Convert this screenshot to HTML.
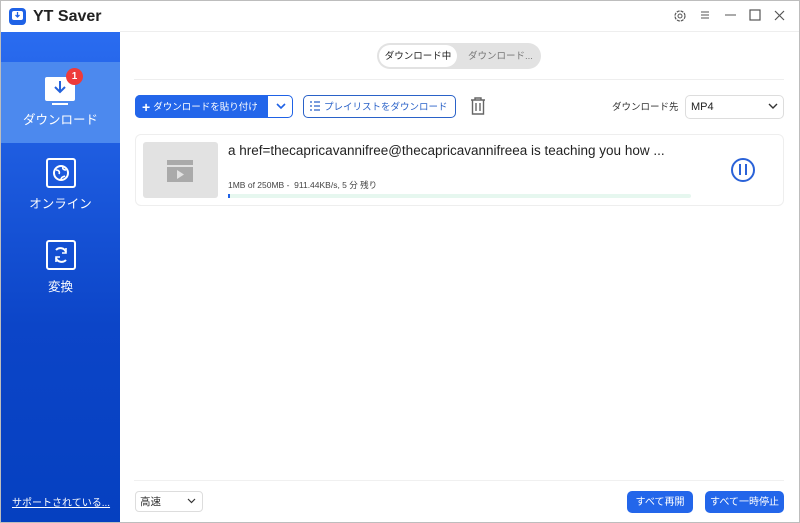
<!DOCTYPE html>
<html><head><meta charset="utf-8"><style>
*{margin:0;padding:0;box-sizing:border-box}
body{width:800px;height:523px;overflow:hidden;background:#fff;font-family:"Liberation Sans","Noto Sans CJK JP",sans-serif;position:relative;color:#333}
.win{position:absolute;left:0;top:0;width:800px;height:523px;border:1px solid #bdbdbd}
.abs{position:absolute;white-space:nowrap}
.side{position:absolute;left:1px;top:32px;width:119px;height:490px;background:linear-gradient(#2a6cf0,#0c45c8 60%,#0540c0)}
.act{position:absolute;left:0;top:30px;width:119px;height:81px;background:#4c89ee}
.sidetxt{color:#fff;font-size:12.5px;text-align:center;width:119px;position:absolute;left:0;white-space:nowrap}
.btn{position:absolute;border-radius:5px;font-size:10px;white-space:nowrap;display:flex;align-items:center;line-height:1}
.c{justify-content:center}
.btn span{position:relative;top:1px}
</style></head><body>
<div class="win"></div>
<div class="abs" style="left:9px;top:8px;width:17px;height:17px;background:#1f62e6;border-radius:4px"></div>
<div class="abs" style="left:12px;top:11px;width:11px;height:9px;background:#fff;border-radius:2px"></div>
<svg class="abs" style="left:13px;top:11px" width="9" height="9"><path d="M4.5 1v5M2.5 4l2 2 2-2" stroke="#1f62e6" stroke-width="1.3" fill="none"/></svg>
<div class="abs" style="left:33px;top:8px;font-size:16px;font-weight:bold;color:#222">YT Saver</div>
<svg class="abs" style="left:673px;top:9px" width="14" height="14"><circle cx="7" cy="7" r="5" stroke="#555" fill="none" stroke-width="1.2" stroke-dasharray="3 1"/><circle cx="7" cy="7" r="2" stroke="#555" fill="none"/></svg>
<svg class="abs" style="left:700px;top:10px" width="10" height="10"><path d="M1 2h8M1 5h8M1 8h8" stroke="#555"/></svg>
<svg class="abs" style="left:725px;top:10px" width="11" height="10"><path d="M0 5h11" stroke="#555"/></svg>
<svg class="abs" style="left:749px;top:9px" width="12" height="12"><rect x="1" y="1" width="10" height="10" stroke="#555" fill="none" stroke-width="1.2"/></svg>
<svg class="abs" style="left:774px;top:10px" width="11" height="11"><path d="M1 1l9 9M10 1l-9 9" stroke="#555" stroke-width="1.2"/></svg>
<div class="abs" style="left:120px;top:31px;width:679px;height:1px;background:#eee"></div>
<div class="side">
 <div class="act"></div>
 <div class="abs" style="left:44px;top:45px;width:30px;height:24px;background:#fff;border-radius:2px"></div>
 <div class="abs" style="left:51px;top:71px;width:16px;height:2px;background:#fff"></div>
 <svg class="abs" style="left:50px;top:47px" width="18" height="18"><path d="M9 2v11M4 8l5 5 5-5" stroke="#2563dc" stroke-width="2" fill="none"/></svg>
 <div class="abs" style="left:65px;top:36px;width:17px;height:17px;background:#ee3b3b;border-radius:50%;color:#fff;font-size:10px;font-weight:bold;text-align:center;line-height:17px">1</div>
 <div class="sidetxt" style="top:77px">ダウンロード</div>
 <div class="abs" style="left:45px;top:126px;width:30px;height:30px;border:2px solid #fff;border-radius:3px"></div>
 <svg class="abs" style="left:51px;top:132px" width="18" height="18"><circle cx="9" cy="9" r="7" stroke="#fff" stroke-width="2" fill="none"/><path d="M4 6c3 0 4 2 3 4M9 16c0-3 2-3 4-4M11 3c-1 2 1 3 3 3" stroke="#fff" stroke-width="1.6" fill="none"/></svg>
 <div class="sidetxt" style="top:161px">オンライン</div>
 <div class="abs" style="left:45px;top:208px;width:30px;height:30px;border:2px solid #fff;border-radius:3px"></div>
 <svg class="abs" style="left:51px;top:214px" width="18" height="18"><path d="M14 6A6 6 0 0 0 4 4M4 12a6 6 0 0 0 10 2" stroke="#fff" stroke-width="2" fill="none"/><path d="M14 2v5h-4M4 16v-5h4" stroke="#fff" stroke-width="1.6" fill="none"/></svg>
 <div class="sidetxt" style="top:244px">変換</div>
 <div class="abs" style="left:11px;top:462px;color:#fff;font-size:10px;text-decoration:underline">サポートされている...</div>
</div>
<div class="abs" style="left:377px;top:43px;width:164px;height:26px;background:#e2e2e2;border-radius:13px"></div>
<div class="btn c" style="left:379px;top:45px;width:78px;height:22px;background:#fff;border-radius:11px;font-size:9.5px;color:#222"><span>ダウンロード中</span></div>
<div class="btn" style="left:468px;top:45px;height:22px;font-size:9.5px;color:#777"><span>ダウンロード...</span></div>
<div class="abs" style="left:134px;top:79px;width:650px;height:1px;background:#eee"></div>
<div class="btn" style="left:135px;top:95px;width:158px;height:23px;border:1px solid #1f62e6;background:#fff"></div>
<div class="btn" style="left:135px;top:95px;width:133px;height:23px;background:#2366ea;border-radius:5px 0 0 5px;color:#fff;padding-left:7px;font-size:9.5px"><b style="font-size:14px;margin-right:3px">+</b><span>ダウンロードを貼り付け</span></div>
<svg class="abs" style="left:275px;top:101px" width="12" height="10"><path d="M2 3l4 4 4-4" stroke="#1f62e6" stroke-width="1.6" fill="none"/></svg>
<div class="btn" style="left:303px;top:95px;width:153px;height:23px;border:1.5px solid #2a62c8;color:#2a62c8;padding-left:20px;font-size:9.5px"><span>プレイリストをダウンロード</span></div>
<svg class="abs" style="left:310px;top:101px" width="10" height="10"><path d="M0 1h2M0 5h2M0 9h2M4 1h6M4 5h6M4 9h6" stroke="#2a62c8" stroke-width="1.3"/></svg>
<svg class="abs" style="left:469px;top:96px" width="18" height="20"><path d="M2 4h14M6 4V2h6v2M3.5 4v14h11V4M7 7v8M11 7v8" stroke="#666" stroke-width="1.4" fill="none"/></svg>
<div class="btn" style="left:612px;top:95px;height:24px;font-size:9.5px;color:#333"><span>ダウンロード先</span></div>
<div class="btn" style="left:685px;top:95px;width:99px;height:24px;border:1px solid #ddd;font-size:11px;padding-left:5px;color:#222">MP4</div>
<svg class="abs" style="left:768px;top:102px" width="10" height="8"><path d="M1 2l4 4 4-4" stroke="#333" stroke-width="1.4" fill="none"/></svg>
<div class="abs" style="left:135px;top:134px;width:649px;height:72px;border:1px solid #eee;border-radius:6px"></div>
<div class="abs" style="left:143px;top:142px;width:75px;height:56px;background:#e2e2e2;border-radius:3px"></div>
<svg class="abs" style="left:167px;top:160px" width="26" height="22"><rect x="0" y="0" width="26" height="5" fill="#aaa"/><rect x="0" y="7" width="26" height="15" fill="#aaa"/><path d="M10 10v9l7-4.5z" fill="#e2e2e2"/></svg>
<div class="abs" style="left:228px;top:143px;font-size:13.5px;color:#222">a href=thecapricavannifree@thecapricavannifreea is teaching you how ...</div>
<div class="abs" style="left:228px;top:179px;font-size:8.5px;color:#444">1MB of 250MB -&nbsp; 911.44KB/s, 5 分 残り</div>
<div class="abs" style="left:228px;top:194px;width:463px;height:4px;background:#e6f7ef;border-radius:2px"></div>
<div class="abs" style="left:228px;top:194px;width:2px;height:4px;background:#1f62e6"></div>
<div class="abs" style="left:731px;top:158px;width:24px;height:24px;border:2px solid #2a62d8;border-radius:50%"></div>
<div class="abs" style="left:739px;top:164px;width:2px;height:11px;background:#2a62d8"></div>
<div class="abs" style="left:745px;top:164px;width:2px;height:11px;background:#2a62d8"></div>
<div class="abs" style="left:134px;top:480px;width:650px;height:1px;background:#f0f0f0"></div>
<div class="btn" style="left:135px;top:491px;width:68px;height:21px;border:1px solid #ddd;border-radius:4px;font-size:10.5px;padding-left:4px"><span>高速</span></div>
<svg class="abs" style="left:187px;top:498px" width="9" height="7"><path d="M1 1l3.5 3.5L8 1" stroke="#333" stroke-width="1.2" fill="none"/></svg>
<div class="btn c" style="left:627px;top:491px;width:66px;height:22px;background:#2366ea;color:#fff"><span>すべて再開</span></div>
<div class="btn c" style="left:705px;top:491px;width:79px;height:22px;background:#2366ea;color:#fff"><span>すべて一時停止</span></div>
</body></html>
